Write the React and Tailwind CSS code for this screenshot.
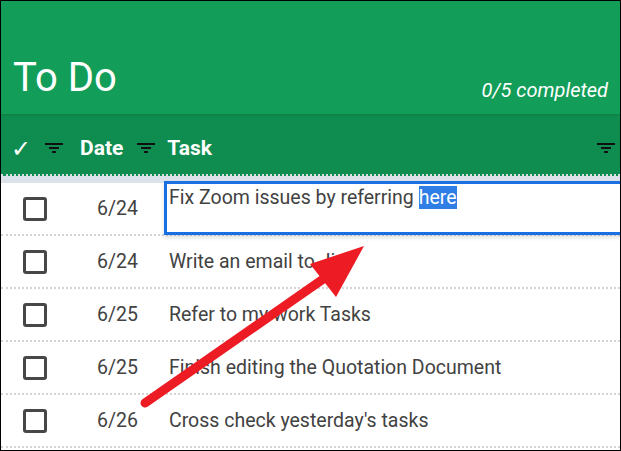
import React from 'react';

const ROWS = [
  { date: '6/24', task: 'Fix Zoom issues by referring ', editing: true },
  { date: '6/24', task: 'Write an email to Jim' },
  { date: '6/25', task: 'Refer to my work Tasks' },
  { date: '6/25', task: 'Finish editing the Quotation Document' },
  { date: '6/26', task: "Cross check yesterday's tasks" },
];

function FilterIcon() {
  return (
    <svg width="18" height="11" viewBox="0 0 18 11" className="shrink-0">
      <rect x="0" y="0" width="18" height="2" fill="#111" />
      <rect x="4" y="4" width="10" height="2" fill="#111" />
      <rect x="7" y="8" width="4" height="2" fill="#111" />
    </svg>
  );
}

function Checkbox() {
  return <div className="w-[24px] h-[24px] border-[3px] border-[#474747] rounded-[3px] shrink-0" />;
}

export default function App() {
  return (
    <div className="relative w-[621px] h-[451px] overflow-hidden border border-black bg-white font-['Roboto',sans-serif]">
      {/* title bar */}
      <div className="h-[113px] bg-[#129d58] flex items-end justify-between pl-[12px] pr-[12px] pb-[16px]">
        <h1 className="text-[40px] leading-none text-white font-normal">To Do</h1>
        <span className="text-[20px] italic text-white leading-none mb-[-2px]">0/5 completed</span>
      </div>
      <div className="h-[2px] bg-[#0e8448]" />

      {/* column header */}
      <div className="h-[58px] bg-[#0f8c4f] flex items-center pt-[7px] text-white font-bold text-[21px]">
        <span className="ml-[10px] w-[34px] text-[24px] leading-none font-normal">✓</span>
        <FilterIcon />
        <span className="ml-[17px]">Date</span>
        <span className="ml-[14px]"><FilterIcon /></span>
        <span className="ml-[12px]">Task</span>
        <span className="ml-auto mr-[5px]"><FilterIcon /></span>
      </div>
      <div className="border-b-2 border-dotted border-[#d9dee3] bg-[#0f8c4f]" />
      <div className="h-[7px] bg-[#dce2e9]" />

      {/* rows */}
      <div className="flex flex-col text-[19.5px] text-[#424242]">
        {ROWS.map((r, i) => (
          <div
            key={i}
            className="h-[53px] flex items-center border-b-2 border-dotted border-[#d4d4d4]"
          >
            <div className="ml-[22px]"><Checkbox /></div>
            <div className="w-[91px] text-right">{r.date}</div>
            {r.editing ? (
              <div className="relative self-stretch flex-1 ml-[26px]">
                <div className="absolute left-0 top-[-2px] right-[-4px] h-[54px] border-[3px] border-[#1a6fe3] bg-white shadow-[0_3px_4px_rgba(0,0,0,0.12)] pl-[2px] pt-[2px] leading-[23px]">
                  {r.task}
                  <span className="bg-[#2f7ee6] text-white">here</span>
                </div>
              </div>
            ) : (
              <div className="ml-[31px]">{r.task}</div>
            )}
          </div>
        ))}
      </div>

      {/* annotation arrow */}
      <svg className="absolute left-0 top-0 pointer-events-none" width="621" height="451">
        <line x1="144" y1="402" x2="328" y2="274" stroke="#ed1c24" strokeWidth="9" strokeLinecap="round" />
        <polygon points="363,245 309,263 335,296" fill="#ed1c24" />
      </svg>
    </div>
  );
}
